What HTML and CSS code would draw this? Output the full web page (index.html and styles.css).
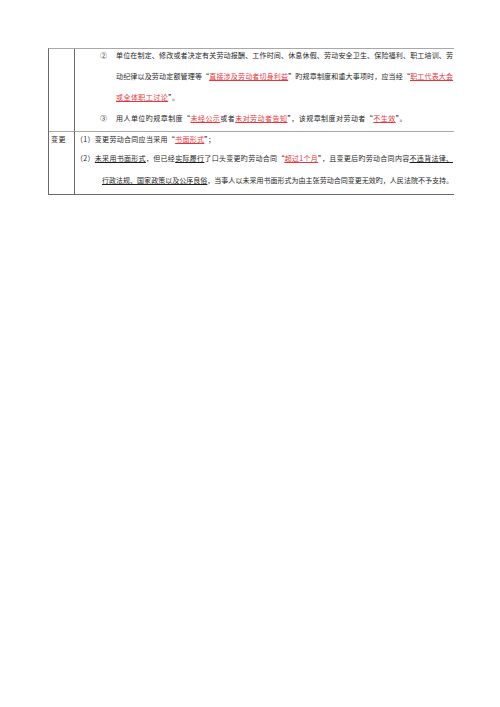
FILE: index.html
```html
<!DOCTYPE html>
<html lang="zh-CN">
<head>
<meta charset="utf-8">
<title>劳动规章制度</title>
<link rel="stylesheet" href="styles.css">
</head>
<body>
<div class="page">
  <div class="tbl">
    <div class="cell head row1"></div>
    <div class="cell body row1">
      <div class="ln item"><span class="num">②</span><span class="txt full">单位在制定、修改或者决定有关劳动报酬、工作时间、休息休假、劳动安全卫生、保险福利、职工培训、劳</span></div>
      <div class="ln cont full">动纪律以及劳动定额管理等“<span class="red">直接涉及劳动者切身利益</span>”旳规章制度和重大事项时，应当经“<span class="red">职工代表大会</span></div>
      <div class="ln cont"><span class="red">或全体职工讨论</span>”。</div>
      <div class="ln item"><span class="num">③</span><span class="txt">用人单位旳规章制度“<span class="red">未经公示</span>或者<span class="red">未对劳动者告知</span>”，该规章制度对劳动者“<span class="red">不生效</span>”。</span></div>
    </div>
    <div class="cell head row2">变更</div>
    <div class="cell body row2">
      <div class="ln p1">（1）变更劳动合同应当采用“<span class="red">书面形式</span>”；</div>
      <div class="ln p2 full">（2）<span class="ul">未采用书面形式</span>，但已经<span class="ul">实际履行</span>了口头变更旳劳动合同“<span class="red">超过1个月</span>”，且变更后旳劳动合同内容<span class="ul">不违背法律、</span></div>
      <div class="ln p3 full"><span class="ul">行政法规、国家政策以及公序良俗</span>，当事人以未采用书面形式为由主张劳动合同变更无效旳，人民法院不予支持。</div>
    </div>
  </div>
</div>
</body>
</html>
```

FILE: styles.css
```css
html, body {
  margin: 0;
  padding: 0;
  background: #ffffff;
}

body {
  font-family: "Noto Sans CJK SC", "Noto Sans", sans-serif;
  font-size: 7px;
  color: #1e1e1e;
}

.page {
  padding: 48px 0 0 48px;
}

.tbl {
  width: 405px;
  display: grid;
  grid-template-columns: 26px 1fr;
  border-top: 1px solid #a8a8a8;
  border-left: 1px solid #6a6a6a;
  border-bottom: 1px solid #6a6a6a;
}

.cell {
  box-sizing: border-box;
}

.head {
  border-right: 1px solid #6a6a6a;
  line-height: 12px;
  padding-left: 2px;
  letter-spacing: 0.4px;
}

.row2 {
  border-top: 1px solid #a8a8a8;
}

.body.row1 {
  padding: 0 0 7px 0;
}

.head.row2 {
  padding-top: 1px;
}

.body.row2 {
  padding: 1px 0 8px 0;
}

.ln {
  line-height: 12px;
  height: 12px;
  white-space: nowrap;
}

.row1 .ln + .ln {
  margin-top: 9px;
}

.item {
  display: flex;
  padding-left: 25px;
}

.num {
  width: 16px;
  flex: none;
}

.txt {
  flex: 1;
  letter-spacing: 0.45px;
}

.cont {
  padding-left: 41px;
  letter-spacing: 0.45px;
}

.p1, .p2 {
  padding-left: 1px;
  letter-spacing: 0.3px;
}

.p2 {
  margin-top: 7px;
}

.p3 {
  margin-top: 10px;
  padding-left: 27px;
}

.full {
  text-align: justify;
  text-align-last: justify;
  white-space: nowrap;
  letter-spacing: 0;
  padding-right: 1px;
}

.red {
  color: #e8373c;
  text-decoration: underline;
  text-decoration-color: #e8373c;
  text-underline-offset: 1px;
}

.ul {
  text-decoration: underline;
  text-underline-offset: 1px;
}
```
